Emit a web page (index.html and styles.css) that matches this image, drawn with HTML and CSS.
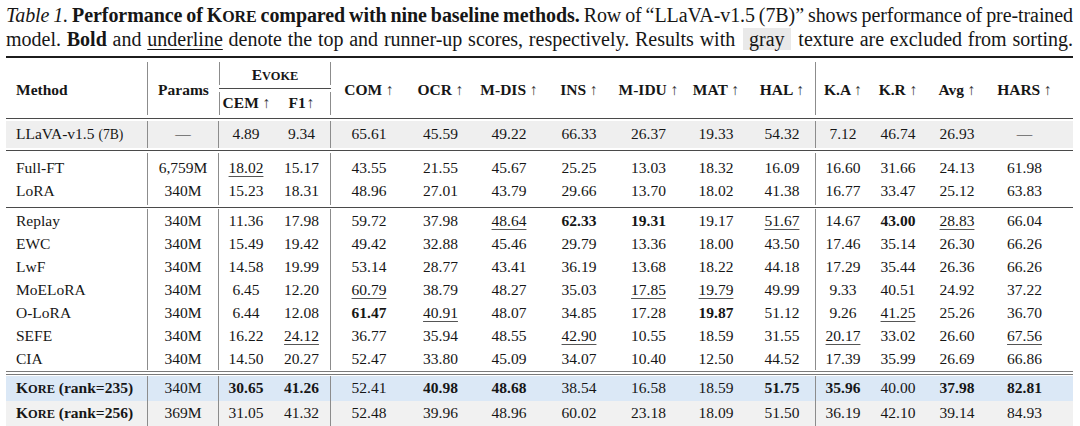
FILE: index.html
```html
<!DOCTYPE html>
<html>
<head>
<meta charset="utf-8">
<link rel="stylesheet" href="styles.css">
</head>
<body>
<div class="page">
  <div class="caption">
    <div class="cap-line1"><i>Table 1.</i> <b>Performance of K<span class="sc">ORE</span> compared with nine baseline methods.</b> Row of “LLaVA-v1.5 (7B)” shows performance of pre-trained</div>
    <div class="cap-line2">model. <b>Bold</b> and <span class="cap-u">underline</span> denote the top and runner-up scores, respectively. Results with <span class="chip">gray</span> texture are excluded from sorting.</div>
  </div>

  <div class="tbl">
    <div class="rule-thick"></div>
    <div class="hdr">
      <div class="h-method"><span>Method</span></div>
      <div class="h-params"><span>Params</span></div>
      <div class="h-evoke"><span>E<span class="sc">VOKE</span></span></div>
      <div class="h-cmid"><div class="cmid-line"></div></div>
      <div class="h-cem"><span>CEM <span class="arr">↑</span></span></div>
      <div class="h-f1"><span>F1<span class="arr tight">↑</span></span></div>
      <div class="h-span"><span>COM <span class="arr">↑</span></span></div>
      <div class="h-span"><span>OCR <span class="arr">↑</span></span></div>
      <div class="h-span"><span>M-DIS <span class="arr">↑</span></span></div>
      <div class="h-span"><span>INS <span class="arr">↑</span></span></div>
      <div class="h-span"><span>M-IDU <span class="arr">↑</span></span></div>
      <div class="h-span"><span>MAT <span class="arr">↑</span></span></div>
      <div class="h-span h-vr"><span>HAL <span class="arr">↑</span></span></div>
      <div class="h-span"><span>K.A <span class="arr">↑</span></span></div>
      <div class="h-span"><span>K.R <span class="arr">↑</span></span></div>
      <div class="h-span"><span>Avg <span class="arr">↑</span></span></div>
      <div class="h-span h-last"><span>HARS <span class="arr">↑</span></span></div>
    </div>
    <div class="rule"></div>

    <div class="group g-base">
      <div class="row row-base">
        <div>LLaVA-v1.5 <span class="small">(7B)</span></div><div>—</div><div>4.89</div><div>9.34</div><div>65.61</div><div>45.59</div><div>49.22</div><div>66.33</div><div>26.37</div><div>19.33</div><div>54.32</div><div>7.12</div><div>46.74</div><div>26.93</div><div>—</div>
      </div>
    </div>
    <div class="rule"></div>

    <div class="group g-1">
      <div class="row first">
        <div>Full-FT</div><div>6,759M</div><div><span class="u">18.02</span></div><div>15.17</div><div>43.55</div><div>21.55</div><div>45.67</div><div>25.25</div><div>13.03</div><div>18.32</div><div>16.09</div><div>16.60</div><div>31.66</div><div>24.13</div><div>61.98</div>
      </div>
      <div class="row last">
        <div>LoRA</div><div>340M</div><div>15.23</div><div>18.31</div><div>48.96</div><div>27.01</div><div>43.79</div><div>29.66</div><div>13.70</div><div>18.02</div><div>41.38</div><div>16.77</div><div>33.47</div><div>25.12</div><div>63.83</div>
      </div>
    </div>
    <div class="rule"></div>

    <div class="group g-2">
      <div class="row">
        <div>Replay</div><div>340M</div><div>11.36</div><div>17.98</div><div>59.72</div><div>37.98</div><div><span class="u">48.64</span></div><div><b>62.33</b></div><div><b>19.31</b></div><div>19.17</div><div><span class="u">51.67</span></div><div>14.67</div><div><b>43.00</b></div><div><span class="u">28.83</span></div><div>66.04</div>
      </div>
      <div class="row">
        <div>EWC</div><div>340M</div><div>15.49</div><div>19.42</div><div>49.42</div><div>32.88</div><div>45.46</div><div>29.79</div><div>13.36</div><div>18.00</div><div>43.50</div><div>17.46</div><div>35.14</div><div>26.30</div><div>66.26</div>
      </div>
      <div class="row">
        <div>LwF</div><div>340M</div><div>14.58</div><div>19.99</div><div>53.14</div><div>28.77</div><div>43.41</div><div>36.19</div><div>13.68</div><div>18.22</div><div>44.18</div><div>17.29</div><div>35.44</div><div>26.36</div><div>66.26</div>
      </div>
      <div class="row">
        <div>MoELoRA</div><div>340M</div><div>6.45</div><div>12.20</div><div><span class="u">60.79</span></div><div>38.79</div><div>48.27</div><div>35.03</div><div><span class="u">17.85</span></div><div><span class="u">19.79</span></div><div>49.99</div><div>9.33</div><div>40.51</div><div>24.92</div><div>37.22</div>
      </div>
      <div class="row">
        <div>O-LoRA</div><div>340M</div><div>6.44</div><div>12.08</div><div><b>61.47</b></div><div><span class="u">40.91</span></div><div>48.07</div><div>34.85</div><div>17.28</div><div><b>19.87</b></div><div>51.12</div><div>9.26</div><div><span class="u">41.25</span></div><div>25.26</div><div>36.70</div>
      </div>
      <div class="row">
        <div>SEFE</div><div>340M</div><div>16.22</div><div><span class="u">24.12</span></div><div>36.77</div><div>35.94</div><div>48.55</div><div><span class="u">42.90</span></div><div>10.55</div><div>18.59</div><div>31.55</div><div><span class="u">20.17</span></div><div>33.02</div><div>26.60</div><div><span class="u">67.56</span></div>
      </div>
      <div class="row">
        <div>CIA</div><div>340M</div><div>14.50</div><div>20.27</div><div>52.47</div><div>33.80</div><div>45.09</div><div>34.07</div><div>10.40</div><div>12.50</div><div>44.52</div><div>17.39</div><div>35.99</div><div>26.69</div><div>66.86</div>
      </div>
    </div>
    <div class="double-rule"><div class="rule"></div><div class="rule"></div></div>

    <div class="group g-3">
      <div class="row row-ours">
        <div><b>K<span class="sc">ORE</span> (rank=235)</b></div><div>340M</div><div><b>30.65</b></div><div><b>41.26</b></div><div>52.41</div><div><b>40.98</b></div><div><b>48.68</b></div><div>38.54</div><div>16.58</div><div>18.59</div><div><b>51.75</b></div><div><b>35.96</b></div><div>40.00</div><div><b>37.98</b></div><div><b>82.81</b></div>
      </div>
      <div class="row row-ours2">
        <div><b>K<span class="sc">ORE</span> (rank=256)</b></div><div>369M</div><div>31.05</div><div>41.32</div><div>52.48</div><div>39.96</div><div>48.96</div><div>60.02</div><div>23.18</div><div>18.09</div><div>51.50</div><div>36.19</div><div>42.10</div><div>39.14</div><div>84.93</div>
      </div>
    </div>
    <div class="rule-thick bottom"></div>
  </div>
</div>
</body>
</html>
```

FILE: styles.css
```css
* { box-sizing: border-box; }

body {
  margin: 0;
  background: #ffffff;
  color: #161616;
  font-family: "Liberation Serif", "Times New Roman", serif;
}

.page {
  width: 1067px;
  margin-left: 6px;
  padding-top: 4px;
}

/* ---------- caption ---------- */
.caption {
  font-size: 20px;
  line-height: 22px;
  margin-bottom: 6px;
}
.cap-line1,
.cap-line2 {
  text-align: justify;
  text-align-last: justify;
  white-space: nowrap;
}
.cap-line1 {
  word-spacing: -2.5px;
  letter-spacing: -0.08px;
}
.cap-u {
  text-decoration: underline;
  text-decoration-thickness: 1px;
  text-underline-offset: 3px;
}
.chip {
  background: #e9e9e9;
  padding: 0 6px;
  margin: 0 2px;
}
.sc { font-size: 0.8em; }

/* ---------- table ---------- */
.tbl {
  font-size: 15.5px;
  width: 1067px;
}
.rule-thick {
  height: 2px;
  background: #1c1c1c;
}
.rule {
  height: 1px;
  background: #4a4a4a;
}
.rule-thick.bottom { margin-top: 3px; }

.double-rule {
  display: flex;
  flex-direction: column;
  gap: 2px;
  margin: 1px 0;
}
.double-rule .rule { background: #7a7a7a; }

.hdr,
.row {
  display: grid;
  grid-template-columns: 142px 71px 54px 58px 76px 67px 70px 70px 69px 66px 67px 54px 56px 62px 85px;
}

/* header */
.hdr {
  grid-template-rows: 23px 7px 23px;
  margin: 4px 0 3px;
  font-weight: bold;
  white-space: nowrap;
}
.hdr > div {
  display: flex;
  align-items: center;
  justify-content: center;
}
.h-method {
  grid-column: 1;
  grid-row: 1 / 4;
  justify-content: flex-start !important;
  padding: 3px 0 0 10px;
  border-right: 1px solid #8c8c8c;
}
.h-params {
  grid-column: 2;
  grid-row: 1 / 4;
  padding-top: 3px;
}
.h-evoke {
  grid-column: 3 / 5;
  grid-row: 1;
  border-left: 1px solid #8c8c8c;
  border-right: 1px solid #8c8c8c;
  padding-top: 2px;
}
.h-cmid {
  grid-column: 3 / 5;
  grid-row: 2;
}
.cmid-line {
  width: 100%;
  height: 1px;
  background: #4a4a4a;
}
.h-cem {
  grid-column: 3;
  grid-row: 3;
  border-left: 1px solid #8c8c8c;
  padding-bottom: 1px;
}
.h-f1 {
  grid-column: 4;
  grid-row: 3;
  border-right: 1px solid #8c8c8c;
  padding-bottom: 1px;
}
.h-span {
  grid-row: 1 / 4;
  padding-top: 3px;
}
.h-vr { border-right: 1px solid #8c8c8c; }
.h-last { padding-right: 12px; }
.arr {
  font-weight: normal;
  color: #3a3a3a;
}
.arr.tight { margin-left: 1px; }

/* body rows */
.group { margin: 2px 0; }
.g-2 { margin: 1px 0 0; }
.g-3 { margin: 0; }

.row {
  line-height: 23px;
  text-align: center;
  white-space: nowrap;
}
.row > div:nth-child(1) {
  text-align: left;
  padding-left: 10px;
}
.row > div:nth-child(15) { padding-right: 12px; }
.row > div:nth-child(1),
.row > div:nth-child(2),
.row > div:nth-child(4),
.row > div:nth-child(11) {
  border-right: 1px solid #8c8c8c;
}
.row.first > div { padding-top: 3px; }
.row.last > div { padding-bottom: 3px; }

.row-base {
  line-height: 26px;
  background: #efefef;
}
.row-ours { background: #dbe8f6; }
.row-ours2 { background: #f1f1f1; }

.small { font-size: 0.88em; }

.u {
  text-decoration: underline;
  text-decoration-thickness: 1px;
  text-underline-offset: 3px;
  text-decoration-color: #555;
}
```
